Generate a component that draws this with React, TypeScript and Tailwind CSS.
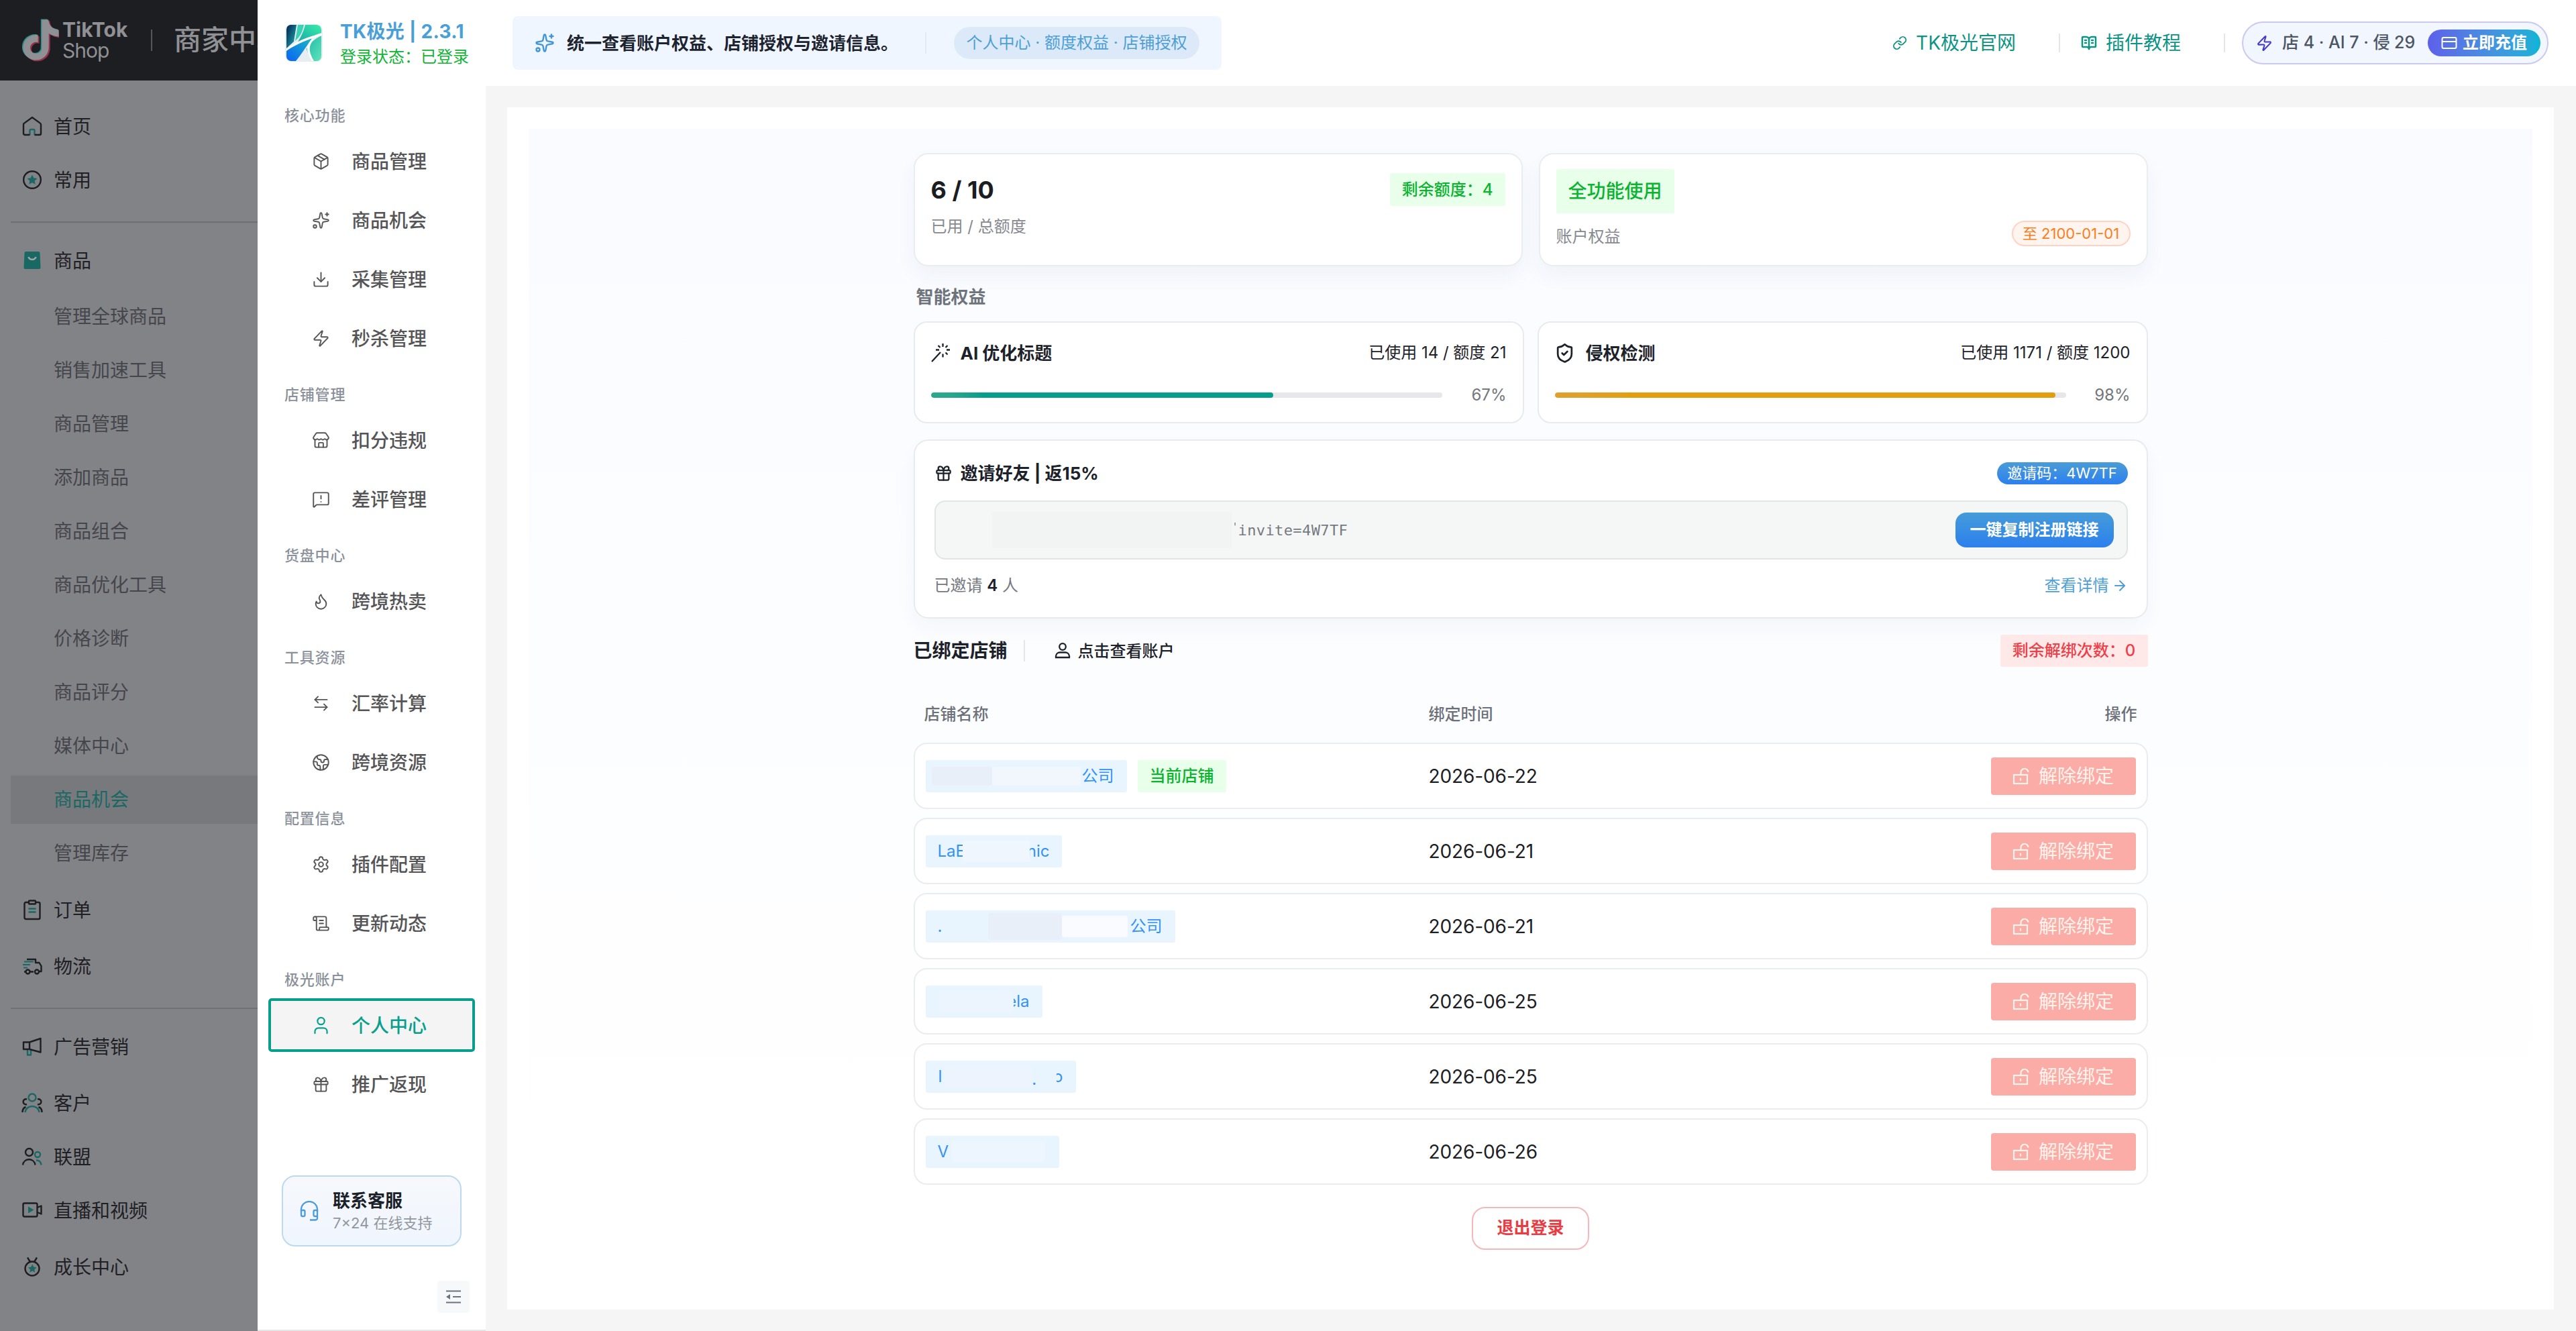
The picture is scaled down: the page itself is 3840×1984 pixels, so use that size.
import React from 'react';
import {
  ArrowLeftRight,
  ArrowRight,
  BookOpenText,
  Download,
  Earth,
  Flame,
  Gift,
  Link,
  MessageSquareWarning,
  Package,
  ScrollText,
  Settings,
  ShieldCheck,
  Sparkles,
  Store,
  User,
  Zap,
  type LucideIcon,
} from 'lucide-react';

const INK = '#1d1e22';
const TEAL = '#1a6864';

const NOTE =
  'M12.525.02c1.31-.02 2.61-.01 3.91-.02.08 1.53.63 3.09 1.75 4.17 1.12 1.11 2.7 1.62 4.24 1.79v4.03c-1.44-.05-2.89-.35-4.2-.97-.57-.26-1.1-.59-1.62-.93-.01 2.92.01 5.84-.02 8.75-.08 1.4-.54 2.79-1.35 3.94-1.31 1.92-3.58 3.17-5.91 3.21-1.43.08-2.86-.31-4.08-1.03-2.02-1.19-3.44-3.37-3.65-5.71-.02-.5-.03-1-.01-1.49.18-1.9 1.12-3.72 2.58-4.96 1.66-1.44 3.98-2.13 6.15-1.72.02 1.48-.04 2.96-.04 4.44-.99-.32-2.15-.23-3.02.37-.63.41-1.11 1.04-1.36 1.75-.21.51-.15 1.07-.14 1.61.24 1.64 1.82 3.02 3.5 2.87 1.12-.01 2.19-.66 2.77-1.61.19-.33.4-.67.41-1.06.1-1.79.06-3.57.07-5.36.01-4.03-.01-8.05.02-12.07z';

function TikTokMark() {
  return (
    <svg viewBox="0.6 -0.6 22 25.6" className="h-[64px] w-[56px] shrink-0" preserveAspectRatio="none">
      <path d={NOTE} fill="#2b8f90" transform="translate(-0.6 -0.4)" />
      <path d={NOTE} fill="#98314c" transform="translate(0.8 0.7)" />
      <path d={NOTE} fill="#8f9094" />
    </svg>
  );
}

function Duo({ children }: { children: React.ReactNode }) {
  return (
    <svg
      viewBox="0 0 32 32"
      className="h-8 w-8 shrink-0"
      fill="none"
      stroke={INK}
      strokeWidth="2.4"
      strokeLinejoin="round"
      strokeLinecap="butt"
    >
      {children}
    </svg>
  );
}

const STAR = 'M16 8.5l2.300 4.800 5.200.700-3.800 3.600.95 5.200-4.650-2.500-4.650 2.500.95-5.200-3.800-3.600 5.200-.700z';

const duoIcons = {
  home: (
    <Duo>
      <path d="M12.5 29v-6.500a1.500 1.500 0 0 1 1.500-1.500h4a1.500 1.500 0 0 1 1.500 1.500V29" stroke={TEAL} />
      <path d="M12.500 29H5a2 2 0 0 1-2-2V13.500a2 2 0 0 1 .8-1.600L16 3l12.200 8.900a2 2 0 0 1 .8 1.600V27a2 2 0 0 1-2 2h-7.500" />
    </Duo>
  ),
  star: (
    <Duo>
      <circle cx="16" cy="16" r="12.800" />
      <path d={STAR} fill={TEAL} stroke="none" />
    </Duo>
  ),
  bag: (
    <Duo>
      <path d="M6.500 3h19a2 2 0 0 1 2 2l1 22a2 2 0 0 1-2 2h-21a2 2 0 0 1-2-2l1-22a2 2 0 0 1 2-2z" fill="#1a6864" stroke="none" />
      <path d="M10.500 11c1.500 5 9.500 5 11 0" stroke="#a5a6a9" strokeWidth="2.600" />
    </Duo>
  ),
  order: (
    <Duo>
      <rect x="4.500" y="5" width="23" height="25" rx="2" />
      <rect x="11" y="2.500" width="10" height="5" rx="1" fill="#828387" />
      <path d="M10.500 14.500h11M10.500 19.500h11" stroke={TEAL} />
    </Duo>
  ),
  truck: (
    <Duo>
      <path d="M4 9.500h14M2 14h11M3 18.500h6" stroke={TEAL} strokeWidth="2" />
      <path d="M8 6h13v5h5.500l3 5v8H27M18 24.500h-5M4 24.500h2" />
      <circle cx="9.500" cy="24.500" r="3" />
      <circle cx="23" cy="24.500" r="3" />
    </Duo>
  ),
  ads: (
    <Duo>
      <path d="M9 20v8.500h5V21" stroke={TEAL} />
      <path d="M12 9.500v10.500M3 9.500h9L28.500 4v20.500L12 20H3z" />
    </Duo>
  ),
  customer: (
    <Duo>
      <path d="M8 10.500a4 4 0 1 0 0 7.500M24 10.500a4 4 0 1 1 0 7.500M1.500 30c0-4 2-7 5-8M30.500 30c0-4-2-7-5-8" />
      <circle cx="16" cy="8" r="5.500" stroke={TEAL} />
      <path d="M5.500 30c1.500-12 19.500-12 21 0" stroke={TEAL} />
    </Duo>
  ),
  union: (
    <Duo>
      <circle cx="24" cy="13" r="4" stroke={TEAL} />
      <path d="M22 21.500c4 0 7 2.500 7.500 7" stroke={TEAL} />
      <circle cx="11.500" cy="9.500" r="5.500" />
      <path d="M2 28.500c1.500-11 17-11 18.500 0" />
    </Duo>
  ),
  video: (
    <Duo>
      <rect x="2.500" y="5.500" width="21" height="20" rx="2" />
      <path d="M23.500 12l6-2.500v12l-6-2.500" />
      <path d="M10 10.500l8.500 5-8.500 5z" fill={TEAL} stroke="none" />
    </Duo>
  ),
  growth: (
    <Duo>
      <path d="M9 2.500l4 6.500M23 2.500L19 9" />
      <circle cx="16" cy="19" r="10.500" />
      <path d={STAR} transform="translate(2.600 5.300) scale(.85)" fill={TEAL} stroke="none" />
    </Duo>
  ),
};

function SellerItem({ icon, label, className = '' }: { icon: keyof typeof duoIcons; label: string; className?: string }) {
  return (
    <div className={`flex h-20 items-center gap-4 pl-8 text-[28px] text-[#1f2024] ${className}`}>
      {duoIcons[icon]}
      <span className="mt-px">{label}</span>
    </div>
  );
}

const sellerSub = [
  '管理全球商品',
  '销售加速工具',
  '商品管理',
  '添加商品',
  '商品组合',
  '商品优化工具',
  '价格诊断',
  '商品评分',
  '媒体中心',
  '商品机会',
  '管理库存',
];

function SellerSidebar() {
  return (
    <aside className="h-full w-[384px] shrink-0 overflow-hidden bg-[#828387] whitespace-nowrap">
      <div className="flex h-[120px] items-center bg-[#1d1e22] pl-8 text-[#909195]">
        <TikTokMark />
        <div className="ml-[5px] w-[132px] shrink-0 text-[30px] leading-[31px]">
          <div className="font-bold">TikTok</div>
          <div className="tracking-[-1px]">Shop</div>
        </div>
        <div className="h-8 w-[2px] shrink-0 bg-[#55565a]" />
        <div className="ml-8 shrink-0 text-[41px] font-medium">商家中心</div>
      </div>
      <SellerItem icon="home" label="首页" className="mt-7" />
      <SellerItem icon="star" label="常用" />
      <div className="mt-[22px] ml-4 h-[2px] bg-[#6f7074]" />
      <SellerItem icon="bag" label="商品" className="mt-4 mb-1" />
      {sellerSub.map((label) => (
        <div key={label} className="flex h-20 items-center pl-4">
          <div
            className={
              label === '商品机会'
                ? 'flex h-[72px] w-full items-center bg-[#78797d] pl-16 text-[28px] text-[#1a6864]'
                : 'flex h-[72px] w-full items-center pl-16 text-[28px] text-[#45464b]'
            }
          >
            {label}
          </div>
        </div>
      ))}
      <SellerItem icon="order" label="订单" className="mt-1" />
      <SellerItem icon="truck" label="物流" className="mt-1" />
      <div className="mt-[22px] ml-4 h-[2px] bg-[#6f7074]" />
      <SellerItem icon="ads" label="广告营销" className="mt-4" />
      <SellerItem icon="customer" label="客户" className="mt-1" />
      <SellerItem icon="union" label="联盟" />
      <SellerItem icon="video" label="直播和视频" />
      <SellerItem icon="growth" label="成长中心" className="mt-1" />
    </aside>
  );
}

function AuroraLogo() {
  return (
    <svg viewBox="0 0 56 56" className="h-14 w-14 shrink-0">
      <defs>
        <linearGradient id="lgA" x1="0" y1="0" x2="1" y2="1">
          <stop offset="0" stopColor="#04204f" />
          <stop offset="1" stopColor="#1fb5b8" />
        </linearGradient>
        <linearGradient id="lgB" x1="0" y1="1" x2="1" y2="0">
          <stop offset="0" stopColor="#0a63f5" />
          <stop offset="1" stopColor="#19b8c4" />
        </linearGradient>
        <linearGradient id="lgC" x1="0" y1="1" x2="1" y2="0">
          <stop offset="0" stopColor="#169fa8" />
          <stop offset="1" stopColor="#36efa8" />
        </linearGradient>
        <linearGradient id="lgD" x1="0" y1="0" x2="1" y2="1">
          <stop offset="0" stopColor="#1fb6ad" />
          <stop offset="1" stopColor="#5fe6b8" />
        </linearGradient>
      </defs>
      <rect width="56" height="56" rx="9" fill="#e6edf3" />
      <path d="M8 1h9L13 26 2 36V8a7 7 0 0 1 6-7z" fill="url(#lgA)" />
      <path d="M19 1h9c-2 10-5 17-13 24z" fill="#38d3b4" />
      <path d="M30 1h17a8 8 0 0 1 7 7v5C42 17 28 22 16 31c6-9 11-18 14-30z" fill="url(#lgC)" />
      <path d="M2 40c10-8 22-14 38-19-8 12-16 24-24 34H9a7 7 0 0 1-7-7z" fill="url(#lgB)" />
      <path d="M54 17v31a7 7 0 0 1-7 7h-5c-6-9-10-15-10-18 5-9 12-15 22-20z" fill="url(#lgD)" />
      <path d="M1 38C16 25 34 19 55 14v3C38 21 20 28 1 40z" fill="#fff" />
      <path d="M41 22C31 31 30 38 40 55h3C34 39 35 32 44 21z" fill="#fff" />
    </svg>
  );
}

type NavItem = { icon: LucideIcon; label: string };
const nav: { title: string; items: NavItem[] }[] = [
  {
    title: '核心功能',
    items: [
      { icon: Package, label: '商品管理' },
      { icon: Sparkles, label: '商品机会' },
      { icon: Download, label: '采集管理' },
      { icon: Zap, label: '秒杀管理' },
    ],
  },
  {
    title: '店铺管理',
    items: [
      { icon: Store, label: '扣分违规' },
      { icon: MessageSquareWarning, label: '差评管理' },
    ],
  },
  { title: '货盘中心', items: [{ icon: Flame, label: '跨境热卖' }] },
  {
    title: '工具资源',
    items: [
      { icon: ArrowLeftRight, label: '汇率计算' },
      { icon: Earth, label: '跨境资源' },
    ],
  },
  {
    title: '配置信息',
    items: [
      { icon: Settings, label: '插件配置' },
      { icon: ScrollText, label: '更新动态' },
    ],
  },
  {
    title: '极光账户',
    items: [
      { icon: User, label: '个人中心' },
      { icon: Gift, label: '推广返现' },
    ],
  },
];

function AuroraSidebar() {
  return (
    <aside className="flex h-full w-[340px] shrink-0 flex-col border-b-2 border-[#e5e5e5] bg-white whitespace-nowrap">
      <div className="flex h-32 items-center pl-[41px]">
        <AuroraLogo />
        <div className="mt-[3px] ml-[26px]">
          <div className="text-[28px] leading-[38px] font-bold tracking-[0.3px] text-[#4a9fd8]">TK极光 | 2.3.1</div>
          <div className="text-[24px] leading-[38px] text-[#12b434]">登录状态：已登录</div>
        </div>
      </div>
      {nav.map((section) => (
        <div key={section.title} className="flex flex-col">
          <div className="flex h-[72px] items-center pt-4 pl-10 text-[22px] font-medium tracking-[0.8px] text-[#8b919b]">
            {section.title}
          </div>
          <div className="flex flex-col gap-2 px-4">
            {section.items.map(({ icon: Icon, label }) => (
              <div
                key={label}
                className={
                  label === '个人中心'
                    ? 'flex h-20 items-center gap-[30px] rounded-[5px] border-4 border-[#079f8b] bg-[#f4f4f5] pl-[59px] text-[28px] font-medium text-[#07a08c]'
                    : 'flex h-20 items-center gap-8 border-4 border-transparent pl-[61px] text-[28px] font-medium text-[#555557]'
                }
              >
                <Icon size={label === '个人中心' ? 31 : 27} strokeWidth={1.7} />
                <span className="mt-px">{label}</span>
              </div>
            ))}
          </div>
        </div>
      ))}
      <div className="mt-[96px] ml-9 flex h-[106px] w-[268px] items-center rounded-[20px] border-2 border-[#bcd9ee] bg-linear-to-b from-[#f6f8fc] to-[#f0f6fe] pl-[25px]">
        <svg viewBox="0 0 28 30" className="h-[30px] w-7" fill="none" stroke="#4a9bdc" strokeWidth="2.300">
          <path d="M2 16v-3a12 12 0 0 1 24 0v3" />
          <path d="M2 14h3.500a2 2 0 0 1 2 2v5a2 2 0 0 1-2 2H4a2 2 0 0 1-2-2zM26 14h-3.500a2 2 0 0 0-2 2v5a2 2 0 0 0 2 2H26zM26 22v4a2.500 2.500 0 0 1-2.500 2.500H15" />
        </svg>
        <div className="mt-[3px] ml-[21px]">
          <div className="text-[26px] leading-[32px] font-bold text-[#1b2129]">联系客服</div>
          <div className="text-[22px] leading-[34px] text-[#92969d]">7×24 在线支持</div>
        </div>
      </div>
      <div className="mt-[51px] ml-[268px] flex h-12 w-12 items-center justify-center rounded bg-[#f7f8fa]">
        <svg viewBox="0 0 24 22" className="h-[22px] w-6" stroke="#6b7280" strokeWidth="2.200">
          <path d="M1 2.500h22M11 11h12M1 19.500h22" />
          <path d="M1 11l6-4v8z" fill="#6b7280" stroke="none" />
        </svg>
      </div>
    </aside>
  );
}

function TopBar() {
  return (
    <header className="flex h-32 shrink-0 items-center bg-white pr-[41px] pl-10 whitespace-nowrap">
      <div className="flex h-20 w-[1057px] items-center rounded-lg bg-[#f0f6ff] pl-[33px]">
        <Sparkles size={30} strokeWidth={1.9} color="#3f96d8" />
        <span className="ml-[18px] text-[26px] font-bold text-[#1d2430]">统一查看账户权益、店铺授权与邀请信息。</span>
        <span className="ml-10 h-8 w-[2px] bg-[#e2eaf5]" />
        <span className="ml-[41px] flex h-12 w-[366px] items-center justify-center rounded-full bg-[#dce9f9] text-[24px] text-[#4c9fd4]">
          个人中心 · 额度权益 · 店铺授权
        </span>
      </div>
      <div className="ml-auto flex items-center">
        <Link size={22} strokeWidth={2} color="#0c9484" />
        <span className="ml-[13px] text-[28px] text-[#0c9484]">TK极光官网</span>
        <span className="ml-[64px] h-7 w-[2px] bg-[#e5e6eb]" />
        <BookOpenText className="ml-[31px]" size={24} strokeWidth={2.5} color="#0c9484" />
        <span className="ml-[13px] text-[28px] text-[#0c9484]">插件教程</span>
        <span className="ml-[64px] h-7 w-[2px] bg-[#e5e6eb]" />
        <div className="ml-[25px] flex h-16 w-[457px] items-center rounded-full border-2 border-[#cbc9ef] bg-[#f2f6fe] pr-[10px] pl-[19px]">
          <Zap size={25} strokeWidth={2} color="#4338ca" />
          <span className="ml-[14px] text-[25px] font-medium text-[#4b5563]">店 4 · AI 7 · 侵 29</span>
          <span className="ml-auto flex h-10 w-[168px] items-center justify-center rounded-full bg-linear-to-r from-[#5d5fea] to-[#08b4d6] text-[24px] font-bold text-white">
            <svg viewBox="0 0 24 20" className="mr-2 h-5 w-6" fill="none" stroke="#fff" strokeWidth="2">
              <rect x="1.500" y="2" width="21" height="16" rx="2" />
              <path d="M1.500 8h21" />
            </svg>
            立即充值
          </span>
        </div>
      </div>
    </header>
  );
}

function WandIcon() {
  return (
    <svg viewBox="0 0 28 28" className="h-7 w-7" fill="none" stroke="#1d2129" strokeWidth="2.300">
      <path d="M1 27l13-14M17.500 0v5M17.500 15.500v5M7 9.500h5M23 9.500h5M10.500 3l3 3M24.500 3l-3 3M24.500 16.500l-3-3" />
    </svg>
  );
}

function QuotaCard(props: { icon: React.ReactNode; title: string; usage: string; percent: number; color: string }) {
  return (
    <div className="flex h-[152px] flex-1 flex-col rounded-[20px] border-2 border-[#e9eaec] bg-white px-6">
      <div className="mt-[25px] flex h-10 items-center justify-between">
        <span className="flex items-center gap-4 text-[26px] font-bold text-[#1d2129]">
          {props.icon}
          {props.title}
        </span>
        <span className="text-[24px] text-[#1d2129]">{props.usage}</span>
      </div>
      <div className="mt-[23px] flex h-10 items-center justify-between">
        <div className="h-2 w-[762px] overflow-hidden rounded-full bg-[#e7e7e9]">
          <div className={`h-full rounded-full ${props.color}`} style={{ width: `${props.percent}%` }} />
        </div>
        <span className="text-[24px] text-[#75777c]">{props.percent}%</span>
      </div>
    </div>
  );
}

function UnlockIcon() {
  return (
    <svg viewBox="0 0 26 28" className="h-7 w-[26px]" fill="none" stroke="#fff3ec" strokeWidth="2.200">
      <rect x="2" y="12" width="20" height="13" />
      <path d="M12 16.500v4M12.500 12V8.500a5.500 5.500 0 0 1 11-.5" />
    </svg>
  );
}

const CHIP = 'flex h-12 items-center rounded-[3px] bg-[#e8f5ff] text-[24px] text-[#3491fa]';

const shops: { date: string; chip: React.ReactNode; current?: boolean }[] = [
  {
    date: '2026-06-22',
    current: true,
    chip: (
      <div className={`${CHIP} w-[300px] justify-end pr-[19px]`}>
        <span className="h-7 w-[90px] rounded bg-[#e9eff8]" />
        <span className="mr-0.5 h-7 w-[132px] rounded bg-[#f2f7fe]" />
        公司
      </div>
    ),
  },
  {
    date: '2026-06-21',
    chip: (
      <div className={`${CHIP} w-[203px] justify-between px-[18px]`}>
        <span>LaE</span>
        <span className="relative z-10 -mr-1 -ml-1 h-8 flex-1 rounded-l bg-[#eff6fe]" />
        <span>nic</span>
      </div>
    ),
  },
  {
    date: '2026-06-21',
    chip: (
      <div className={`${CHIP} w-[372px] pr-[19px] pl-[18px]`}>
        <span>.</span>
        <span className="ml-auto h-10 w-[110px] rounded bg-[#e8eff8]" />
        <span className="mr-1 h-8 w-[98px] rounded bg-[#f9fbff]" />
        公司
      </div>
    ),
  },
  {
    date: '2026-06-25',
    chip: (
      <div className={`${CHIP} w-[174px] justify-end pr-[19px]`}>
        <span className="relative z-10 -mr-[10px] h-8 w-[112px] rounded-l bg-[#ecf4fd]" />
        <span>ela</span>
      </div>
    ),
  },
  {
    date: '2026-06-25',
    chip: (
      <div className={`${CHIP} w-[224px] px-[19px]`}>
        <span>l</span>
        <span className="ml-1 h-8 w-[130px] rounded bg-[#edf4fd]" />
        <span className="mt-2">.</span>
        <span className="relative z-10 -mr-[5px] h-8 flex-1 bg-[#e8f5ff]" />
        <span>o</span>
      </div>
    ),
  },
  {
    date: '2026-06-26',
    chip: (
      <div className={`${CHIP} w-[199px] pl-[18px]`}>
        <span>V</span>
        <span className="ml-1 h-8 w-[140px] rounded bg-[#edf5fe]" />
      </div>
    ),
  },
];

function Account() {
  return (
    <div className="mx-auto flex w-[1840px] flex-col whitespace-nowrap">
      <div className="mt-9 flex gap-6">
        <div className="flex h-[169px] flex-1 items-start justify-between rounded-[22px] border-2 border-[#ebecee] bg-white px-6 pt-[28px] shadow-[0_14px_30px_rgba(30,60,110,0.05)]">
          <div>
            <div className="text-[36px] leading-[50px] font-bold text-[#1b1d21]">6 / 10</div>
            <div className="mt-[12px] text-[24px] leading-[36px] text-[#86898f]">已用 / 总额度</div>
          </div>
          <div className="flex h-[49px] items-center rounded-[3px] bg-[#e8ffea] px-[18px] text-[24px] font-medium text-[#0ab42f]">
            剩余额度：4
          </div>
        </div>
        <div className="flex h-[169px] flex-1 flex-col items-start rounded-[22px] border-2 border-[#ebecee] bg-white px-6 pt-[22px] shadow-[0_14px_30px_rgba(30,60,110,0.05)]">
          <div className="flex h-[66px] items-center rounded-[3px] bg-[#e8ffea] px-[18px] text-[28px] font-medium text-[#0ab42f]">
            全功能使用
          </div>
          <div className="mt-[10px] flex h-10 w-full items-center justify-between">
            <span className="mt-[10px] text-[24px] text-[#86898f]">账户权益</span>
            <span className="flex h-[38px] w-[177px] items-center justify-center rounded-full border-2 border-[#ffd3c4] bg-[#fff4ee] text-[22px] text-[#fa7d1e]">
              至 2100-01-01
            </span>
          </div>
        </div>
      </div>
      <div className="mt-[26px] ml-1 text-[26px] leading-[40px] font-bold text-[#6e737b]">智能权益</div>
      <div className="mt-4 flex gap-5">
        <QuotaCard
          icon={<WandIcon />}
          title="AI 优化标题"
          usage="已使用 14 / 额度 21"
          percent={67}
          color="bg-linear-to-r from-[#2aa78c] from-5% to-[#049e8a] to-15%"
        />
        <QuotaCard
          icon={<ShieldCheck className="-ml-px" size={31} strokeWidth={2.1} />}
          title="侵权检测"
          usage="已使用 1171 / 额度 1200"
          percent={98}
          color="bg-linear-to-r from-[#e0a12c] from-5% to-[#e39e10] to-15%"
        />
      </div>
      <div className="mt-6 flex h-[267px] flex-col rounded-[22px] border-2 border-[#e9eaec] bg-white pr-7 pl-[29px] shadow-[0_14px_30px_rgba(30,60,110,0.04)]">
        <div className="mt-[28px] flex h-10 items-center justify-between">
          <span className="flex items-center gap-[12px] text-[26px] font-bold text-[#1d2129]">
            <Gift size={27} strokeWidth={2} />
            邀请好友 | 返15%
          </span>
          <span className="flex h-[33px] w-[195px] items-center justify-center rounded-full bg-linear-to-b from-[#4a9cd6] to-[#2d7ff0] text-[22px] text-white">
            邀请码：4W7TF
          </span>
        </div>
        <div className="mt-[21px] flex h-[88px] items-center rounded-[16px] border-2 border-[#e2e4e5] bg-[#f5f7f7] pr-[19px]">
          <span className="ml-[84px] h-[54px] w-[358px] rounded bg-[#f2f3f3]" />
          <span className="flex items-center font-['DejaVu_Sans_Mono','Liberation_Mono',monospace] text-[22px] text-[#767a80]">
            <span className="-mt-2 w-[9px] text-[15px]">'</span>
            <span className="tracking-[0.4px]">invite=4W7TF</span>
          </span>
          <span className="ml-auto flex h-[52px] w-[236px] items-center justify-center rounded-[16px] bg-linear-to-b from-[#469bd8] to-[#2c7fee] text-[24px] font-bold text-white">
            一键复制注册链接
          </span>
        </div>
        <div className="mt-[19px] flex h-10 items-center justify-between text-[24px]">
          <span className="text-[#75797f]">
            已邀请 <b className="font-semibold text-[#1d2129]">4</b> 人
          </span>
          <span className="flex items-center gap-1 text-[#509fd6]">
            查看详情
            <ArrowRight size={24} strokeWidth={2} />
          </span>
        </div>
      </div>
      <div className="mt-6 flex h-12 items-center">
        <span className="text-[28px] font-bold text-[#1d2129]">已绑定店铺</span>
        <span className="ml-6 h-8 w-[2px] bg-[#e5e6eb]" />
        <svg viewBox="0 0 24 24" className="ml-[44px] h-6 w-6" fill="none" stroke="#1d2129" strokeWidth="2.300">
          <circle cx="12" cy="6" r="4.800" />
          <path d="M2 22v-2a6 6 0 0 1 6-5.500h8a6 6 0 0 1 6 5.500v2z" />
        </svg>
        <span className="mt-px ml-[11px] text-[24px] font-medium text-[#1d2129]">点击查看账户</span>
        <span className="ml-auto flex h-12 w-[220px] items-center justify-center rounded-[3px] bg-[#ffe9e8] text-[24px] font-medium text-[#ee4048]">
          剩余解绑次数：0
        </span>
      </div>
      <div className="mt-[51px] flex h-10 items-center pr-4 pl-4 text-[24px] font-medium text-[#6b7079]">
        <span className="w-[752px]">店铺名称</span>
        <span>绑定时间</span>
        <span className="ml-auto">操作</span>
      </div>
      <div className="mt-[22px] flex flex-col gap-[13px]">
        {shops.map((shop, i) => (
          <div key={i} className="flex h-[99px] items-center rounded-[20px] border-2 border-[#ebecef] bg-white px-4">
            <div className="flex w-[750px] items-center gap-4">
              {shop.chip}
              {shop.current && (
                <span className="flex h-12 w-[132px] items-center justify-center rounded-[3px] bg-[#e8ffea] text-[24px] font-medium text-[#0ab42f]">
                  当前店铺
                </span>
              )}
            </div>
            <span className="text-[28px] tracking-[-0.1px] text-[#1d2024]">{shop.date}</span>
            <span className="ml-auto flex h-14 w-[216px] items-center justify-center gap-[13px] rounded-[4px] bg-[#fbaca7] text-[28px] text-[#fff3ec]">
              <UnlockIcon />
              解除绑定
            </span>
          </div>
        ))}
      </div>
      <div className="mt-[33px] flex h-16 w-[175px] items-center justify-center self-center rounded-[20px] border-2 border-[#f6b7ba] bg-white text-[25px] font-bold text-[#ec3a42]">
        退出登录
      </div>
    </div>
  );
}

export default function App() {
  return (
    <div className="flex h-[1984px] w-[3840px] overflow-hidden bg-[#f5f5f5] font-[Inter,'Noto_Sans_CJK_SC',sans-serif]">
      <SellerSidebar />
      <AuroraSidebar />
      <div className="flex min-w-0 flex-1 flex-col">
        <TopBar />
        <main className="flex-1 p-8 pr-[33px]">
          <div className="h-full bg-white p-8">
            <div className="h-full bg-linear-to-b from-[#f9fbff] to-white to-90%">
              <Account />
            </div>
          </div>
        </main>
      </div>
    </div>
  );
}
